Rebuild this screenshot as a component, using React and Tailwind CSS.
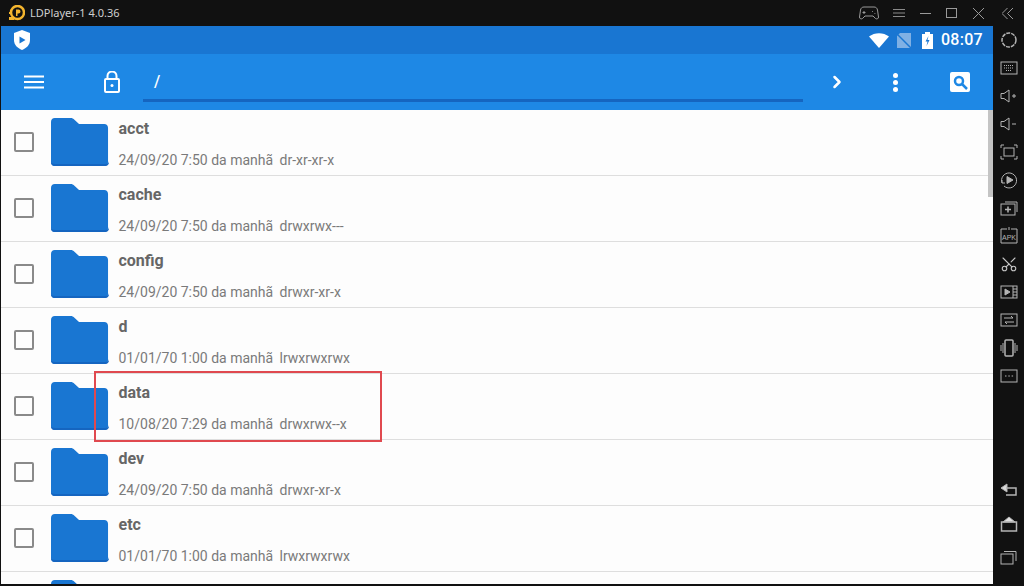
import { ChevronRight, Scissors } from 'lucide-react'

const rows = [
  { name: 'acct', date: '24/09/20 7:50 da manhã', perm: 'dr-xr-xr-x' },
  { name: 'cache', date: '24/09/20 7:50 da manhã', perm: 'drwxrwx---' },
  { name: 'config', date: '24/09/20 7:50 da manhã', perm: 'drwxr-xr-x' },
  { name: 'd', date: '01/01/70 1:00 da manhã', perm: 'lrwxrwxrwx' },
  { name: 'data', date: '10/08/20 7:29 da manhã', perm: 'drwxrwx--x' },
  { name: 'dev', date: '24/09/20 7:50 da manhã', perm: 'drwxr-xr-x' },
  { name: 'etc', date: '01/01/70 1:00 da manhã', perm: 'lrwxrwxrwx' },
  { name: 'fil', date: '', perm: '' },
]

function Folder() {
  return (
    <svg width="58" height="48" viewBox="0 0 60 48" preserveAspectRatio="none" className="shrink-0">
      <path d="M4 0h16c2 0 3 .6 4.500 2l4.500 4h26c2.500 0 4 1.500 4 4v34c0 2.500-1.500 4-4 4H4c-2.500 0-4-1.500-4-4V4c0-2.500 1.500-4 4-4z" fill="#1976d2" />
      <path d="M0 44c0 2.500 1.500 4 4 4h52c2.500 0 4-1.500 4-4v-1c0 2-1.500 3-4 3H4c-2.500 0-4-1-4-3z" fill="#1565c0" />
    </svg>
  )
}

function Row({ name, date, perm }) {
  return (
    <div className="h-[66px] shrink-0 flex items-center border-b border-[#dedede] bg-[#fdfdfd]">
      <div className="ml-[13px] mt-[-2px] w-[20px] h-[20px] shrink-0 border-2 border-[#8a8a8a] rounded-[2px]" />
      <div className="ml-[17px] mt-[-2px]"><Folder /></div>
      <div className="ml-[9.5px] self-start text-[#6e6e6e]">
        <div className="mt-[7px] h-[24px] leading-[24px] text-[16px] font-bold text-[#666666]">{name}</div>
        <div className="mt-[9px] h-[20px] leading-[20px] text-[14px] flex text-[#7a7a7a]">
          <span className="w-[161px]">{date}</span>
          <span>{perm}</span>
        </div>
      </div>
    </div>
  )
}

function SideIcon({ children }) {
  return (
    <svg width="18" height="18" viewBox="0 0 18 18" fill="none" stroke="#b4b4b4" strokeWidth="1" className="shrink-0">
      {children}
    </svg>
  )
}

export default function App() {
  return (
    <div className="relative w-[1024px] h-[586px] overflow-hidden bg-[#111111] flex flex-col font-['Roboto',sans-serif]">
      {/* window title bar */}
      <div className="h-[26px] shrink-0 flex items-center text-[#c8c8c8]">
        <svg width="16" height="16" viewBox="0 0 16 16" className="ml-[9px]">
          <circle cx="8.500" cy="7.500" r="6.500" fill="none" stroke="#f4b52e" strokeWidth="2.500" />
          <path d="M7 4.500h2.500a2 2 0 0 1 0 4H8.500v2.500H7z" fill="#f4b52e" />
          <rect x="0" y="12" width="5" height="3" fill="#f4b52e" />
          <rect x="0" y="7" width="3" height="2" fill="#f4b52e" />
        </svg>
        <span className="ml-[5px] text-[11px] font-['Noto_Sans',sans-serif] text-[#cfcfcf]">LDPlayer-1 4.0.36</span>
        <div className="ml-auto flex items-center">
          <svg width="20" height="14" viewBox="0 0 20 14" fill="none" stroke="#9a9a9a" strokeWidth="1">
            <path d="M5 1h10c2 0 3 1 3.500 3l1 7c.2 1.500-1.500 2.500-3 1.500L14 10H6l-2.500 2.500c-1.500 1-3.200 0-3-1.500l1-7C2 2 3 1 5 1z" />
            <path d="M5 5v3M3.500 6.500h3M13 5.500h.8M15.500 7.500h.8" />
          </svg>
          <svg width="12" height="10" viewBox="0 0 12 10" stroke="#8a8a8a" strokeWidth="1" className="ml-[14px]">
            <path d="M0 1.500h12M0 5h12M0 8.500h12" />
          </svg>
          <div className="ml-[15px] w-[11px] h-[1px] bg-[#9a9a9a]" />
          <div className="ml-[15px] w-[11px] h-[10px] border border-[#9a9a9a]" />
          <svg width="11" height="11" viewBox="0 0 11 11" stroke="#9a9a9a" strokeWidth="1" className="ml-[16px]">
            <path d="M0 0l11 11M11 0L0 11" />
          </svg>
          <svg width="11" height="11" viewBox="0 0 11 11" fill="none" stroke="#9a9a9a" strokeWidth="1" className="ml-[18px] mr-[11px]">
            <path d="M5.500 0L0 5.500 5.500 11M11 0L5.500 5.500 11 11" />
          </svg>
        </div>
      </div>

      <div className="flex flex-1 min-h-0">
        {/* android screen */}
        <div className="w-[993px] shrink-0 flex flex-col pl-[1px] pb-[2px] relative">
          <div className="h-[28px] shrink-0 bg-[#1976d2] flex items-center text-white">
            <svg width="16" height="20" viewBox="0 0 16 20" className="ml-[13px]">
              <path d="M8 0l8 3v7c0 5-3.500 8-8 10-4.500-2-8-5-8-10V3z" fill="#ffffff" />
              <path d="M5.500 6.500l6 3.500-6 3.500z" fill="#1976d2" />
            </svg>
            <div className="ml-auto flex items-center">
              <svg width="20" height="15" viewBox="0 0 20 15"><path d="M0 3.500C5.500-1 14.500-1 20 3.500L10 15z" fill="#ffffff" /></svg>
              <svg width="14" height="15" viewBox="0 0 14 15" className="ml-[8px]">
                <path d="M3 0h11v15H0V3z" fill="#7fb0e4" />
                <path d="M0 1l14 14" stroke="#1976d2" strokeWidth="1.500" />
              </svg>
              <svg width="11" height="17" viewBox="0 0 11 17" className="ml-[11px]">
                <path d="M3 0h5v2h3v15H0V2h3z" fill="#ffffff" />
                <path d="M6.500 4L3.500 9.500h2L4.500 14l3-6h-2z" fill="#1976d2" />
              </svg>
              <span className="ml-[8px] mr-[10px] text-[16px] font-medium tracking-[0.3px]">08:07</span>
            </div>
          </div>

          <div className="h-[56px] shrink-0 bg-[#1e88e5] flex items-center text-white relative">
            <svg width="20" height="14" viewBox="0 0 20 14" stroke="#ffffff" strokeWidth="2" className="ml-[23px] shrink-0">
              <path d="M0 1.500h20M0 7h20M0 12.500h20" />
            </svg>
            <svg width="18" height="22" viewBox="0 0 18 22" fill="none" stroke="#ffffff" strokeWidth="2" className="ml-[59px] shrink-0">
              <rect x="2" y="8" width="14" height="13" rx="1" />
              <path d="M4.500 8V5a4.500 4.500 0 0 1 9 0v3" />
              <circle cx="9" cy="14.500" r="1.500" fill="#ffffff" stroke="none" />
            </svg>
            <div className="ml-[22px] w-[660px] self-stretch relative">
              <span className="absolute left-[11px] top-[16px] text-[16px] font-medium">/</span>
              <div className="absolute left-0 right-0 bottom-[8px] h-[3px] bg-[#1565c0]" />
            </div>
            <ChevronRight size={20} strokeWidth={3} className="ml-[24px]" />
            <div className="ml-[46px] flex flex-col gap-[2px]">
              <div className="w-[5px] h-[5px] rounded-full bg-white" />
              <div className="w-[5px] h-[5px] rounded-full bg-white" />
              <div className="w-[5px] h-[5px] rounded-full bg-white" />
            </div>
            <div className="ml-[52px] w-[20px] h-[20px] rounded-[2px] bg-white flex items-center justify-center">
              <svg width="15" height="15" viewBox="0 0 15 15" fill="none" stroke="#1e88e5" strokeWidth="2.500">
                <circle cx="6" cy="6" r="4" />
                <path d="M9 9l5 5" />
              </svg>
            </div>
          </div>

          <div className="flex-1 min-h-0 overflow-hidden flex flex-col bg-[#fdfdfd] relative">
            {rows.map((r) => <Row key={r.name} {...r} />)}
            <div className="absolute right-0 top-0 w-[5px] h-[87px] bg-[#c4c4c4]" />
          </div>
        </div>

        {/* emulator sidebar */}
        <div className="flex-1 flex flex-col items-center pt-[5px]">
          <div className="flex flex-col items-center gap-[10px]">
            <SideIcon><circle cx="9" cy="9" r="7" strokeWidth="1.500" strokeDasharray="4 1" /></SideIcon>
            <SideIcon><rect x="1" y="3" width="16" height="12" /><path d="M4 6.500h10M4 9h10M6 11.500h6" strokeDasharray="1 1" /></SideIcon>
            <SideIcon><path d="M1 6.500h3L9 3v12l-5-3.500H1zM12 9h4M14 7v4" /></SideIcon>
            <SideIcon><path d="M1 6.500h3L9 3v12l-5-3.500H1zM12 9h4" /></SideIcon>
            <SideIcon><path d="M1 5V2h3M14 2h3v3M17 13v3h-3M4 16H1v-3" /><rect x="4" y="5" width="10" height="8" /></SideIcon>
            <SideIcon><path d="M2 12a7.500 7.500 0 1 1 2 3M2 9v3h3" /><path d="M7 5.500l6 3.500-6 3.500z" fill="#b4b4b4" /></SideIcon>
            <SideIcon><path d="M5 3h12v10" /><rect x="1" y="5" width="14" height="11" /><path d="M8 7.500v6M5 10.500h6" strokeWidth="1.500" /></SideIcon>
            <SideIcon><path d="M7 2H1v14h16V2h-6M9 0v3" /><text x="9" y="13" textAnchor="middle" fontSize="7" fill="#b4b4b4" stroke="none" fontFamily="Liberation Sans">APK</text></SideIcon>
            <Scissors size={18} strokeWidth={1.500} color="#c4c4c4" className="-rotate-90 shrink-0" />
            <SideIcon><rect x="1" y="3" width="16" height="12" /><path d="M13 3v12M13 6h4M13 9h4M13 12h4" /><path d="M5 6l5 3-5 3z" fill="#b4b4b4" /></SideIcon>
            <SideIcon><rect x="1" y="3" width="16" height="12" /><path d="M4 7h9l-2-2M14 11H5l2 2" /></SideIcon>
            <SideIcon><rect x="5" y="1" width="8" height="16" rx="1" strokeWidth="1.500" /><path d="M3 4v10M1 6v6M15 4v10M17 6v6" /></SideIcon>
            <SideIcon><rect x="1" y="3" width="16" height="12" /><path d="M5 9h1.500M8.300 9h1.500M11.600 9h1.500" /></SideIcon>
          </div>
          <div className="mt-auto mb-[20px] flex flex-col items-center gap-[15px]">
            <SideIcon><path d="M7 2L1 6l6 4z" fill="#d8d8d8" /><path d="M6 6h10v7H6" strokeWidth="1.500" /></SideIcon>
            <SideIcon><path d="M9 2L3 7h12z" fill="#e0e0e0" /><rect x="1.500" y="7" width="15" height="9" strokeWidth="1.500" /></SideIcon>
            <SideIcon><rect x="1" y="6" width="12" height="10" /><path d="M4 3.500h12V13" /></SideIcon>
          </div>
        </div>
      </div>

      {/* red annotation box */}
      <div className="absolute left-[94px] top-[371px] w-[288px] h-[71px] border-2 border-[#e0494f]" />
    </div>
  )
}
